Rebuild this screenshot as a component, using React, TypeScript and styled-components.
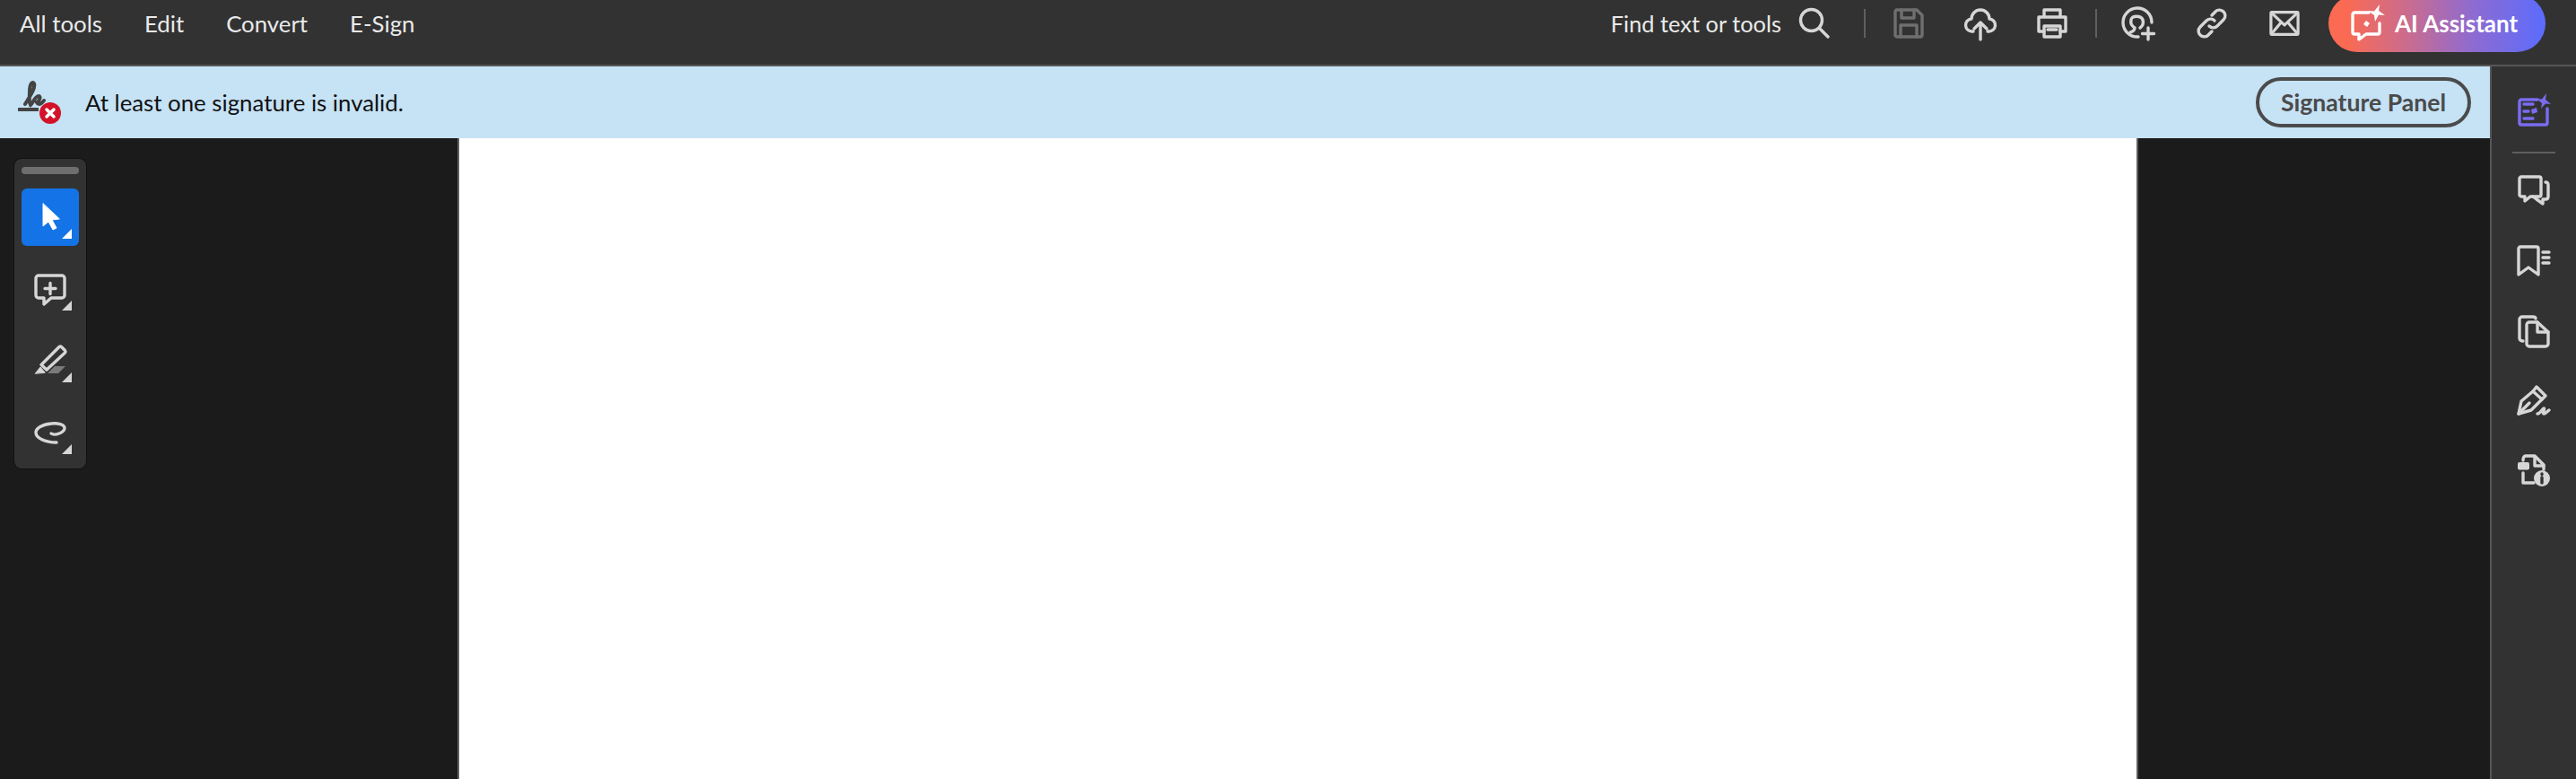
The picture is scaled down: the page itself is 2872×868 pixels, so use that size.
import styled, { createGlobalStyle } from 'styled-components'

const GlobalStyle = createGlobalStyle`
  html, body {
    margin: 0;
    padding: 0;
    height: 100%;
    overflow: hidden;
    background: #1b1b1b;
  }
  #root {
    height: 100%;
  }
`
const Page = styled.div`
  height: 868px;
  display: flex;
  flex-direction: column;
  font-family: Lato, 'Noto Sans', sans-serif;
  -webkit-font-smoothing: antialiased;
`
const TopBar = styled.header`
  height: 52px;
  padding: 0 34px 20px 22px;
  flex: none;
  display: flex;
  align-items: center;
  background: #323232;
  border-bottom: 2px solid #565656;
`
const Nav = styled.nav`
  display: flex;
  gap: 47px;
`
const NavItem = styled.span`
  font-size: 25.8px;
  line-height: 32px;
  color: #eaeaea;
`
const Tools = styled.div`
  margin-left: auto;
  display: flex;
  align-items: center;
`
const FindLabel = styled.span`
  font-size: 25.4px;
  line-height: 32px;
  color: #eaeaea;
  margin-right: 19px;
`
const Separator = styled.i`
  width: 2px;
  height: 32px;
  background: #5f5f5f;
  margin: 0 ${p => p.$right ?? 30}px 0 ${p => p.$left ?? 30}px;
`
const Icon = styled.svg`
  display: block;
  flex: none;
  overflow: visible;
  width: ${p => p.$size ?? 36}px;
  height: ${p => p.$size ?? 36}px;
  margin-right: ${p => p.$gap ?? 0}px;
  fill: none;
  stroke: ${p => p.$color ?? '#d6d6d6'};
  stroke-width: 3.4;
  stroke-linecap: round;
  stroke-linejoin: round;
`
const AiButton = styled.div`
  width: 242px;
  height: 64px;
  margin-left: 32px;
  flex: none;
  box-sizing: border-box;
  padding-left: 24px;
  display: flex;
  align-items: center;
  gap: 10px;
  border-radius: 32px;
  background: linear-gradient(90deg, #fb6a52 8%, #c76c92 38%, #8f6bd0 66%, #5e6cfb 98%);
  color: #fff;
  font-size: 26px;
  font-weight: 700;
`
const Body = styled.div`
  flex: 1;
  min-height: 0;
  display: flex;
`
const Main = styled.main`
  flex: 1;
  min-width: 0;
  display: flex;
  flex-direction: column;
`
const Banner = styled.div`
  height: 80px;
  flex: none;
  box-sizing: border-box;
  padding: 0 21px 0 20px;
  display: flex;
  align-items: center;
  background: #c6e2f5;
  color: #111;
  font-size: 25.8px;
`
const BannerIcon = styled.svg`
  display: block;
  width: 50px;
  height: 50px;
  margin-right: 25px;
  margin-top: 2px;
`
const PanelButton = styled.div`
  margin-left: auto;
  width: 240px;
  height: 56px;
  box-sizing: border-box;
  border: 4px solid #4b4b4b;
  border-radius: 28px;
  display: flex;
  align-items: center;
  justify-content: center;
  color: #4b4b4b;
  font-weight: 700;
  font-size: 26.6px;
`
const Stage = styled.div`
  flex: 1;
  display: flex;
  background: #1b1b1b;
`
const Gutter = styled.div`
  width: 510px;
  flex: none;
  box-sizing: border-box;
  padding: 23px 0 0 16px;
`
const Sheet = styled.div`
  width: 1870px;
  flex: none;
  background: #fff;
  border: solid #5e5e5e;
  border-width: 0 2px;
`
const Toolbox = styled.div`
  width: 80px;
  height: 345px;
  box-sizing: border-box;
  padding: 9px 8px 0;
  display: flex;
  flex-direction: column;
  gap: 16px;
  background: #323232;
  border-radius: 8px;
  box-shadow: 0 0 0 1px #111;
`
const Grip = styled.div`
  height: 8px;
  border-radius: 4px;
  background: #6e6e6e;
`
const ToolButton = styled.div`
  position: relative;
  height: 64px;
  display: flex;
  align-items: center;
  justify-content: center;
  border-radius: 6px;
  background: ${p => (p.$active ? '#1473e6' : 'transparent')};
  &::after {
    content: '';
    position: absolute;
    right: 8px;
    bottom: 8px;
    border-style: solid;
    border-width: 0 0 11px 11px;
    border-color: transparent transparent ${p => (p.$active ? '#fff' : '#d6d6d6')} transparent;
  }
`
const Rail = styled.aside`
  width: 94px;
  flex: none;
  padding-top: 32px;
  display: flex;
  flex-direction: column;
  align-items: center;
  background: #323232;
  border-left: 2px solid #565656;
`
const RailDivider = styled.div`
  width: 48px;
  height: 2px;
  margin: 27px 0 24px;
  background: #5f5f5f;
`
const RailStack = styled.div`
  display: flex;
  flex-direction: column;
  gap: 42px;
`

function App() {
  return (
    <Page>
      <GlobalStyle />
      <TopBar>
        <Nav>
          <NavItem>All tools</NavItem>
          <NavItem>Edit</NavItem>
          <NavItem>Convert</NavItem>
          <NavItem>E-Sign</NavItem>
        </Nav>
        <Tools>
          <FindLabel>Find text or tools</FindLabel>
          <Icon viewBox="0 0 36 36">
            <circle cx="14.5" cy="14.5" r="12" />
            <path d="M23.5 23.5 33 33" />
          </Icon>
          <Separator $left={37} />
          <Icon viewBox="0 0 36 36" $color="#6f6f6f" $gap={44}>
            <path d="M5 3h22l6 6v22a2 2 0 0 1-2 2H5a2 2 0 0 1-2-2V5a2 2 0 0 1 2-2Z" />
            <path d="M10 3v9h14V3M9 33V20h18v13" />
          </Icon>
          <Icon viewBox="0 0 36 36" $gap={44}>
            <path d="M10 27H9a7 7 0 0 1-1-14 10 10 0 0 1 20 0 7 7 0 0 1-1 14h-1" />
            <path d="M18 36V18M11 24l7-7 7 7" />
          </Icon>
          <Icon viewBox="0 0 36 36">
            <path d="M9 11V3h18v8M9 27H3V11h30v16h-6" />
            <rect x="9" y="21" width="18" height="12" />
            <path d="M13 25h10" />
          </Icon>
          <Separator $right={28} />
          <Icon viewBox="0 0 36 36" $gap={46}>
            <path d="M18 33A16 16 0 1 1 33 17" />
            <path d="M9 28c3-1 5-3 5-5-3-2-5-5-4-9 1-5 11-5 13 0 1 4 0 7-3 9" />
            <path d="M29 23v13M22.500 29.500h13" />
          </Icon>
          <Icon viewBox="0 0 36 36" $gap={46}>
            <path d="M15 21c3 3 7 2 9 0l7-7c3-3 2-7 0-9s-7-3-9 0l-4 4" />
            <path d="M21 15c-3-3-7-2-9 0l-7 7c-3 3-2 7 0 9s7 3 9 0l4-4" />
          </Icon>
          <Icon viewBox="0 0 36 36" $size={34}>
            <rect x="2" y="5" width="32" height="26" rx="1" />
            <path d="m3 6 15 14L33 6M3 30l11-13M33 30 22 17" />
          </Icon>
          <AiButton>
            <Icon viewBox="0 0 40 40" $size={40} $color="#fff">
              <path d="M21 8H5a2 2 0 0 0-2 2v20a2 2 0 0 0 2 2h5v6l8-6h13a2 2 0 0 0 2-2V20" />
              <path d="M33-1 32 6 39 11 32 10.500 28 18 27 11 20 6 27 6.500Z" fill="#fff" stroke="none" />
              <path d="m18 17 4 3-3 4-4-3Z" fill="#fff" stroke="none" />
            </Icon>
            AI Assistant
          </AiButton>
        </Tools>
      </TopBar>
      <Body>
        <Main>
          <Banner>
            <BannerIcon viewBox="0 0 50 50">
              <path
                d="M8 26C13 18 20 8 18 3 16 0 13 4 13 12c0 6-1 12 1 15 3-2 5-10 9-10 3 0 1 6-2 7 2 4 6 1 8-2"
                fill="none"
                stroke="#444"
                strokeWidth="4"
                strokeLinecap="round"
              />
              <path d="M0 32h23" stroke="#444" strokeWidth="4" />
              <circle cx="36" cy="36" r="12" fill="#d3122a" />
              <path d="m32 32 8 8M40 32l-8 8" stroke="#fff" strokeWidth="3.500" strokeLinecap="round" />
            </BannerIcon>
            At least one signature is invalid.
            <PanelButton>Signature Panel</PanelButton>
          </Banner>
          <Stage>
            <Gutter>
              <Toolbox>
                <Grip />
                <ToolButton $active>
                  <Icon viewBox="0 0 36 36" $color="#fff">
                    <path d="M10 3v25l6-5 5 9 4-2-5-9 8-1Z" fill="#fff" strokeWidth="1" />
                  </Icon>
                </ToolButton>
                <ToolButton>
                  <Icon viewBox="0 0 36 36">
                    <path d="M5 3h26a3 3 0 0 1 3 3v19a3 3 0 0 1-3 3H19l-8 7v-7H5a3 3 0 0 1-3-3V6a3 3 0 0 1 3-3Z" />
                    <path d="M18 11.500v12M12 17.500h12" />
                  </Icon>
                </ToolButton>
                <ToolButton>
                  <Icon viewBox="0 0 36 36">
                    <path d="M8 22.500 28 2.500a2 2 0 0 1 2.500 0l4 4a2 2 0 0 1 0 2.500L14 28Z" />
                    <path d="M1.500 32 7 25l5 6Z" fill="#d6d6d6" strokeWidth="1" />
                    <path d="M15 32l8-8h12l-8 8Z" fill="#7a7a7a" stroke="none" />
                  </Icon>
                </ToolButton>
                <ToolButton>
                  <Icon viewBox="0 0 36 36">
                    <path d="M19 19c4 3 15-1 15-6 0-4-8-6-15-5C9 9 2 13 2 18c0 6 10 11 23 11" />
                  </Icon>
                </ToolButton>
              </Toolbox>
            </Gutter>
            <Sheet />
          </Stage>
        </Main>
        <Rail>
          <Icon viewBox="0 0 36 36" $color="#7a6cf0">
            <path d="M22 5H4a2 2 0 0 0-2 2v24a2 2 0 0 0 2 2h27a2 2 0 0 0 2-2V15" />
            <path d="M7 10h10M7 18h5M7 26h10" />
            <path d="M32-2 31 5 37 10 31 9.500 26 15 27 9 21 4 27 4.500Z" fill="#7a6cf0" stroke="none" />
            <path d="m15 16 6-2 1 5-6 2Z" fill="#7a6cf0" stroke="none" />
          </Icon>
          <RailDivider />
          <RailStack>
            <Icon viewBox="0 0 36 36">
              <path d="M4 2h20a2 2 0 0 1 2 2v18a2 2 0 0 1-2 2H14l-6 5v-5H4a2 2 0 0 1-2-2V4a2 2 0 0 1 2-2Z" />
              <path d="M31 8c2 0 3 1 3 3v13c0 2-1 3-3 3h-3v5l-7-5-4-3" />
            </Icon>
            <Icon viewBox="0 0 36 36">
              <path d="M4 2h17a2 2 0 0 1 2 2v29l-11-8-11 8V4a2 2 0 0 1 2-2Z" />
              <path d="M28 8h7M28 14h7M28 20h7" />
            </Icon>
            <Icon viewBox="0 0 36 36">
              <path d="M6 29c-2 0-4-1-4-3V5a3 3 0 0 1 3-3h12c2 0 3 1 3 2" />
              <path d="M22 8h-9a3 3 0 0 0-3 3v21a3 3 0 0 0 3 3h18a3 3 0 0 0 3-3V19Z" />
              <path d="M22 8v11h12" />
            </Icon>
            <Icon viewBox="0 0 36 36">
              <path d="M1 32 4 18 17 7 27 16 15 28Z" />
              <path d="m17 7 4-5 10 10-4 4M1 32 13 20" />
              <path d="M22 32c3 0 5-5 7-6s-2 6 0 6 3-2 6-4" />
            </Icon>
            <Icon viewBox="0 0 36 36">
              <path d="M6 6c0-3 1-5 3-5h10l10 10v5" />
              <path d="M19 2v10h10" />
              <path d="M6 20v11h12" />
              <rect x="0" y="8" width="13" height="8.500" rx="2" fill="#d6d6d6" stroke="none" />
              <circle cx="27" cy="26" r="9" fill="#d6d6d6" stroke="none" />
              <path d="M27 25v6M27 21v.5" stroke="#323232" />
            </Icon>
          </RailStack>
        </Rail>
      </Body>
    </Page>
  )
}

export default App
